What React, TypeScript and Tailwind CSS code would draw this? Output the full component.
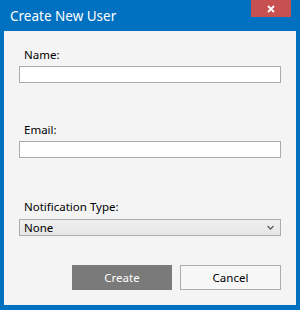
import React from "react";

export default function App() {
  return (
    <div
      className="w-[300px] h-[310px] bg-[#0070c0] flex flex-col"
      style={{ fontFamily: '"Segoe UI", "Noto Sans", "Open Sans", sans-serif' }}
    >
      <div className="h-[31px] flex items-start justify-between pl-[10px] pr-[9px]">
        <div className="text-white text-[13.5px] leading-[20px] mt-[6px]">Create New User</div>
        <button className="w-[40px] h-[17px] bg-[#c75050] flex items-center justify-center">
          <svg width="8" height="8" viewBox="0 0 8 8">
            <path d="M1 1 L7 7 M7 1 L1 7" stroke="white" strokeWidth="1.8" />
          </svg>
        </button>
      </div>
      <div className="mx-[4px] h-[274px] bg-[#f4f4f4] px-[15px] pt-[16px] flex flex-col text-[11.5px] text-black">
        <div className="ml-[5px] leading-[16px] h-[19px]">Name:</div>
        <div className="h-[17px] bg-white border border-[#ababab]" />
        <div className="ml-[5px] leading-[16px] h-[19px] mt-[39px]">Email:</div>
        <div className="h-[17px] bg-white border border-[#ababab]" />
        <div className="ml-[5px] leading-[16px] h-[20px] mt-[41px]">Notification Type:</div>
        <div className="h-[17px] border border-[#acacac] bg-gradient-to-b from-[#f0f0f0] to-[#e5e5e5] flex items-center justify-between pl-[4px] pr-[6px]">
          <span className="leading-[15px]">None</span>
          <svg width="7" height="5" viewBox="0 0 7 5">
            <path d="M0.5 1 L3.5 4 L6.5 1" stroke="#606060" strokeWidth="1.3" fill="none" />
          </svg>
        </div>
        <div className="flex justify-end gap-[8px] mt-[29px]">
          <button className="w-[100px] h-[25px] bg-[#7a7a7a] text-white text-[11.5px]">Create</button>
          <button className="w-[101px] h-[25px] bg-[#f7f7f7] border border-[#adadad] text-black text-[11.5px]">Cancel</button>
        </div>
      </div>
    </div>
  );
}
